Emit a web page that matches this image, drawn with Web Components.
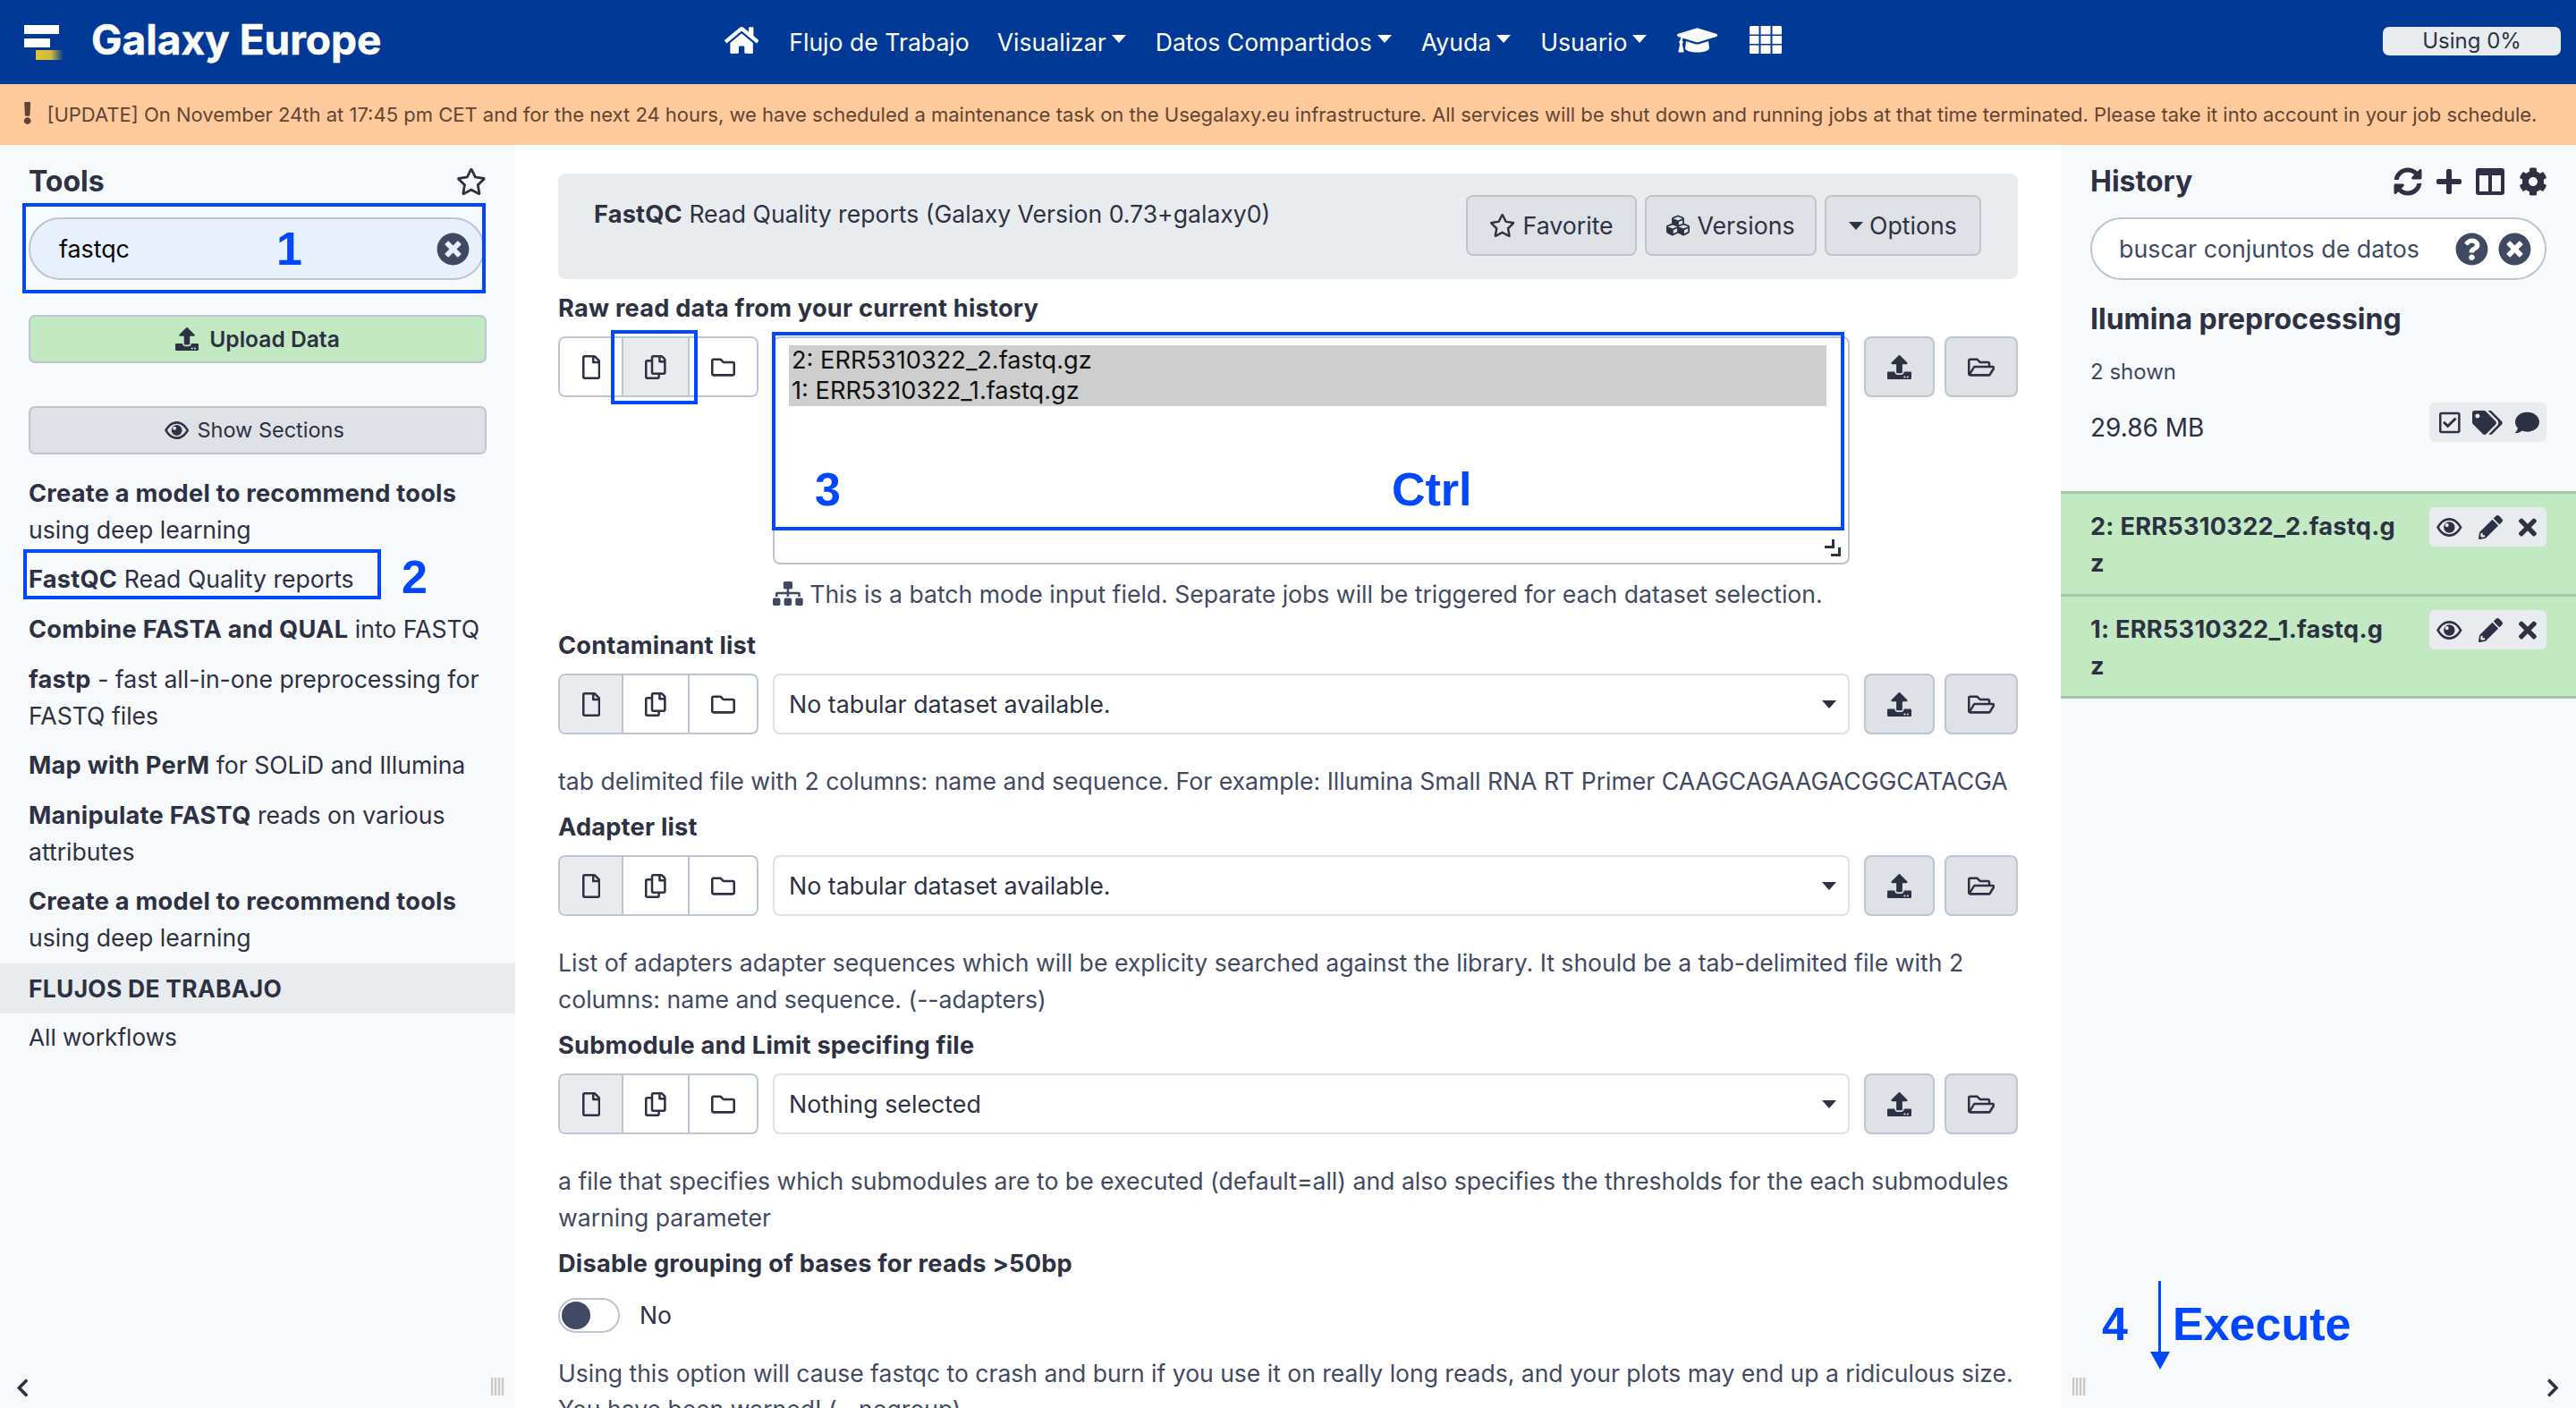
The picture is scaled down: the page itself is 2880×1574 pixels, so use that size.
<!DOCTYPE html>
<html lang="es">
<head>
<meta charset="utf-8">
<title>Galaxy Europe</title>
<style>
html,body{margin:0;padding:0;height:1574px;overflow:hidden;background:#fff}
body{font-family:Inter,"Noto Sans",sans-serif;font-size:26.6px;line-height:40.8px;color:#2c3143;position:relative}
#page{display:flex;flex-direction:column;height:1574px}
#main{display:flex;flex:1;min-height:0}
b{font-weight:700;font-size:27.2px;letter-spacing:.25px}
</style>
</head>
<body>
<div id="page">
  <gx-masthead>
    <gx-nav icon="home" slot="nav" gap="34" h="34"></gx-nav>
    <gx-nav slot="nav" gap="31">Flujo de Trabajo</gx-nav>
    <gx-nav slot="nav" gap="33" caret>Visualizar</gx-nav>
    <gx-nav slot="nav" gap="33" caret>Datos Compartidos</gx-nav>
    <gx-nav slot="nav" gap="33" caret>Ayuda</gx-nav>
    <gx-nav slot="nav" gap="34" caret>Usuario</gx-nav>
    <gx-nav icon="cap" slot="nav" gap="36" h="36"></gx-nav>
    <gx-nav icon="th" slot="nav" h="31"></gx-nav>
  </gx-masthead>
  <gx-banner>[UPDATE] On November 24th at 17:45 pm CET and for the next 24 hours, we have scheduled a maintenance task on the Usegalaxy.eu infrastructure. All services will be shut down and running jobs at that time terminated. Please take it into account in your job schedule.</gx-banner>
  <div id="main">
    <gx-tools>
      <gx-tool><b>Create a model to recommend tools</b> using deep learning</gx-tool>
      <gx-tool><b>FastQC</b> Read Quality reports</gx-tool>
      <gx-tool><b>Combine FASTA and QUAL</b> into FASTQ</gx-tool>
      <gx-tool><b>fastp</b> - fast all-in-one preprocessing for FASTQ files</gx-tool>
      <gx-tool><b>Map with PerM</b> for SOLiD and Illumina</gx-tool>
      <gx-tool><b>Manipulate FASTQ</b> reads on various attributes</gx-tool>
      <gx-tool><b>Create a model to recommend tools</b> using deep learning</gx-tool>
    </gx-tools>
    <gx-form>
      <gx-field label="Raw read data from your current history" active="1" multi>
        <span slot="after"><gx-icon name="sitemap" h="27"></gx-icon> This is a batch mode input field. Separate jobs will be triggered for each dataset selection.</span>
      </gx-field>
      <gx-field label="Contaminant list" active="0" value="No tabular dataset available." help="tab delimited file with 2 columns: name and sequence. For example: Illumina Small RNA RT Primer CAAGCAGAAGACGGCATACGA"></gx-field>
      <gx-field label="Adapter list" active="0" value="No tabular dataset available." help="List of adapters adapter sequences which will be explicity searched against the library. It should be a tab-delimited file with 2 columns: name and sequence. (--adapters)"></gx-field>
      <gx-field label="Submodule and Limit specifing file" active="0" value="Nothing selected" help="a file that specifies which submodules are to be executed (default=all) and also specifies the thresholds for the each submodules warning parameter"></gx-field>
      <gx-toggle label="Disable grouping of bases for reads &gt;50bp" value="No" help="Using this option will cause fastqc to crash and burn if you use it on really long reads, and your plots may end up a ridiculous size. You have been warned! (--nogroup)"></gx-toggle>
    </gx-form>
    <gx-history>
      <gx-dataset w="352">2: ERR5310322_2.fastq.gz</gx-dataset>
      <gx-dataset w="338">1: ERR5310322_1.fastq.gz</gx-dataset>
    </gx-history>
  </div>
</div>

<!-- annotations drawn over the screenshot -->
<gx-mark x="25" y="227" w="518" h="101"></gx-mark>
<gx-mark x="26" y="614" w="400" h="56"></gx-mark>
<gx-mark x="683" y="369" w="97" h="83"></gx-mark>
<gx-mark x="863" y="371" w="1199" h="222"></gx-mark>
<gx-note x="309" y="278">1</gx-note>
<gx-note x="449" y="645">2</gx-note>
<gx-note x="911" y="547">3</gx-note>
<gx-note x="1556" y="547">Ctrl</gx-note>
<gx-note x="2350" y="1480">4</gx-note>
<gx-note x="2429" y="1480">Execute</gx-note>
<gx-arrow x="2404" y="1432" w="22" h="99"></gx-arrow>

<script>
const PATHS={
home:[576,512,"M280.37 148.26L96 300.11V464a16 16 0 0 0 16 16l112.06-.29a16 16 0 0 0 15.92-16V368a16 16 0 0 1 16-16h64a16 16 0 0 1 16 16v95.64a16 16 0 0 0 16 16.05L464 480a16 16 0 0 0 16-16V300L295.67 148.26a12.19 12.19 0 0 0-15.3 0zM571.6 251.47L488 182.56V44.05a12 12 0 0 0-12-12h-56a12 12 0 0 0-12 12v72.61L318.47 43a48 48 0 0 0-61 0L4.34 251.47a12 12 0 0 0-1.6 16.9l25.5 31A12 12 0 0 0 45.15 301l235.22-193.74a12.19 12.19 0 0 1 15.3 0L530.9 301a12 12 0 0 0 16.9-1.6l25.5-31a12 12 0 0 0-1.7-16.93z"],
cap:[640,512,"M622.34 153.2L343.4 67.5c-15.2-4.67-31.6-4.67-46.79 0L17.66 153.2c-23.54 7.23-23.54 38.36 0 45.59l48.63 14.94c-10.67 13.19-17.23 29.28-17.88 46.9C38.78 266.15 32 276.11 32 288c0 10.78 5.68 19.85 13.86 25.65L20.33 428.53C18.11 438.52 25.71 448 35.94 448h56.11c10.24 0 17.84-9.48 15.62-19.47L82.14 313.65C90.32 307.85 96 298.78 96 288c0-11.57-6.47-21.25-15.66-26.87.76-15.02 8.44-28.3 20.69-36.72L296.6 284.5c9.06 2.78 26.44 6.25 46.79 0l278.95-85.7c23.55-7.24 23.55-38.36 0-45.6zM352.79 315.09c-28.53 8.76-52.84 3.92-65.59 0l-145.02-44.55L128 384c0 35.35 85.96 64 192 64s192-28.65 192-64l-14.18-113.47-145.03 44.56z"],
th:[36,31,"M1.500 0H10.500V9.500H0V1.500A1.500 1.500 0 0 1 1.500 0ZM12.500 0H23.500V9.500H12.500ZM25.500 0H34.500A1.500 1.500 0 0 1 36 1.500V9.500H25.500ZM0 11H10.500V20H0ZM12.500 11H23.500V20H12.500ZM25.500 11H36V20H25.500ZM0 21.500H10.500V31H1.500A1.500 1.500 0 0 1 0 29.500ZM12.500 21.500H23.500V31H12.500ZM25.500 21.500H36V29.500A1.500 1.500 0 0 1 34.500 31H25.500Z"],
star:[576,512,"M528.1 171.5L382 150.2 316.7 17.8c-11.7-23.6-45.6-23.9-57.4 0L194 150.2 47.9 171.5c-26.2 3.8-36.7 36.1-17.7 54.6l105.7 103-25 145.5c-4.5 26.3 23.2 46 46.4 33.7L288 439.6l130.7 68.7c23.2 12.2 50.9-7.4 46.4-33.7l-25-145.5 105.7-103c19-18.5 8.5-50.8-17.7-54.6zM388.6 312.3l23.7 138.4L288 385.4l-124.3 65.3 23.7-138.4-100.6-98 139-20.2 62.2-126 62.2 126 139 20.2-100.6 98z"],
close:[512,512,"M256 8C119 8 8 119 8 256s111 248 248 248 248-111 248-248S393 8 256 8zm121.6 313.1c4.7 4.7 4.7 12.3 0 17L338 377.6c-4.7 4.7-12.3 4.7-17 0L256 312l-65.1 65.6c-4.7 4.7-12.3 4.7-17 0L134.4 338c-4.7-4.7-4.7-12.3 0-17l65.6-65-65.6-65.1c-4.7-4.7-4.7-12.3 0-17l39.6-39.6c4.7-4.7 12.3-4.7 17 0l65 65.7 65.1-65.6c4.7-4.7 12.3-4.7 17 0l39.6 39.6c4.7 4.7 4.7 12.3 0 17L312 256l65.6 65.1z"],
help:[512,512,"M504 256c0 136.997-111.043 248-248 248S8 392.997 8 256C8 119.083 119.043 8 256 8s248 111.083 248 248zM262.655 90c-54.497 0-89.255 22.957-116.549 63.758-3.536 5.286-2.353 12.415 2.715 16.258l34.699 26.31c5.205 3.947 12.621 3.008 16.665-2.122 17.864-22.658 30.113-35.797 57.303-35.797 20.429 0 45.698 13.148 45.698 32.958 0 14.976-12.363 22.667-32.534 33.976C247.128 238.528 216 254.941 216 296v4c0 6.627 5.373 12 12 12h56c6.627 0 12-5.373 12-12v-1.333c0-28.462 83.186-29.647 83.186-106.667 0-58.002-60.165-102-116.531-102zM256 338c-25.365 0-46 20.635-46 46 0 25.364 20.635 46 46 46s46-20.636 46-46c0-25.365-20.635-46-46-46z"],
upload:[512,512,"M296 384h-80c-13.3 0-24-10.7-24-24V192h-87.7c-17.8 0-26.7-21.5-14.1-34.1L242.3 5.7c7.5-7.5 19.8-7.5 27.3 0l152.2 152.2c12.6 12.6 3.7 34.1-14.1 34.1H320v168c0 13.3-10.7 24-24 24zm216-8v112c0 13.3-10.7 24-24 24H24c-13.3 0-24-10.7-24-24V376c0-13.3 10.7-24 24-24h136v8c0 30.9 25.1 56 56 56h80c30.9 0 56-25.1 56-56v-8h136c13.3 0 24 10.7 24 24zm-124 88c0-11-9-20-20-20s-20 9-20 20 9 20 20 20 20-9 20-20zm64 0c0-11-9-20-20-20s-20 9-20 20 9 20 20 20 20-9 20-20z"],
eye:[30,22,"M0 11C4 4 9 0 15 0S26 4 30 11C26 18 21 22 15 22S4 18 0 11ZM3.2 11C6.2 6 10 3 15 3S23.800 6 26.800 11C23.800 16 20 19 15 19S6.200 16 3.200 11ZM8.500 11a6.500 6.500 0 1 0 13 0a6.500 6.500 0 1 0-13 0ZM10 8.500a2.200 2.200 0 1 0 4.400 0a2.200 2.200 0 1 0-4.400 0Z","evenodd"],
pencil:[512,512,"M497.9 142.1l-46.1 46.1c-4.7 4.7-12.3 4.7-17 0l-111-111c-4.7-4.7-4.7-12.3 0-17l46.1-46.1c18.7-18.7 49.1-18.7 67.9 0l60.1 60.1c18.8 18.7 18.8 49.1 0 68zM284.2 99.8L21.6 362.4.4 483.9c-2.9 16.4 11.4 30.6 27.8 27.8l121.5-21.3 262.6-262.6c4.7-4.7 4.7-12.3 0-17l-111-111c-4.8-4.7-12.4-4.7-17.1 0zM88 424h48v36.3l-64.500 11.300-31.100-31.100L51.700 376H88v48z"],
times:[352,512,"M242.72 256l100.07-100.07c12.28-12.28 12.28-32.19 0-44.48l-22.24-22.24c-12.28-12.28-32.19-12.28-44.48 0L176 189.28 75.93 89.21c-12.28-12.28-32.19-12.28-44.48 0L9.21 111.45c-12.28 12.28-12.28 32.19 0 44.48L109.28 256 9.21 356.07c-12.28 12.28-12.28 32.19 0 44.48l22.24 22.24c12.28 12.28 32.2 12.28 44.48 0L176 322.72l100.07 100.07c12.28 12.28 32.2 12.28 44.48 0l22.24-22.24c12.28-12.28 12.28-32.19 0-44.48L242.72 256z"],
plus:[448,512,"M416 208H272V64c0-17.67-14.33-32-32-32h-32c-17.67 0-32 14.33-32 32v144H32c-17.67 0-32 14.33-32 32v32c0 17.67 14.33 32 32 32h144v144c0 17.67 14.33 32 32 32h32c17.67 0 32-14.33 32-32V304h144c17.67 0 32-14.33 32-32v-32c0-17.67-14.33-32-32-32z"],
cog:[512,512,"M487.4 315.7l-42.6-24.6c4.3-23.2 4.3-47 0-70.2l42.6-24.6c4.9-2.8 7.1-8.6 5.5-14-11.1-35.6-30-67.8-54.7-94.6-3.8-4.1-10-5.1-14.8-2.3L380.8 110c-17.9-15.4-38.5-27.3-60.8-35.1V25.8c0-5.6-3.9-10.5-9.4-11.7-36.7-8.2-74.3-7.8-109.2 0-5.5 1.2-9.4 6.1-9.4 11.7V75c-22.2 7.9-42.8 19.8-60.8 35.1L88.7 85.5c-4.9-2.8-11-1.9-14.8 2.3-24.7 26.7-43.6 58.9-54.7 94.6-1.7 5.4.6 11.2 5.5 14L67.3 221c-4.3 23.2-4.3 47 0 70.2l-42.6 24.6c-4.9 2.8-7.1 8.6-5.5 14 11.1 35.6 30 67.8 54.7 94.6 3.8 4.1 10 5.1 14.8 2.3l42.6-24.6c17.9 15.4 38.5 27.3 60.8 35.1v49.2c0 5.6 3.9 10.5 9.4 11.7 36.7 8.2 74.3 7.8 109.2 0 5.5-1.2 9.4-6.1 9.4-11.7v-49.2c22.2-7.9 42.8-19.8 60.8-35.1l42.6 24.6c4.9 2.8 11 1.9 14.8-2.3 24.7-26.7 43.6-58.9 54.7-94.6 1.5-5.5-.7-11.3-5.6-14.1zM256 336c-44.1 0-80-35.9-80-80s35.9-80 80-80 80 35.9 80 80-35.9 80-80 80z"],
sync:[512,512,"M370.72 133.28C339.458 104.008 298.888 87.962 255.848 88c-77.458.068-144.328 53.178-162.791 126.85-1.344 5.363-6.122 9.15-11.651 9.15H24.103c-7.498 0-13.194-6.807-11.807-14.176C33.933 94.924 134.813 8 256 8c66.448 0 126.791 26.136 171.315 68.685L463.03 40.97C478.149 25.851 504 36.559 504 57.941V192c0 13.255-10.745 24-24 24H345.941c-21.382 0-32.09-25.851-16.971-40.971l41.75-41.749zM32 296h134.059c21.382 0 32.09 25.851 16.971 40.971l-41.75 41.75c31.262 29.273 71.835 45.319 114.876 45.28 77.418-.07 144.315-53.144 162.787-126.849 1.344-5.363 6.122-9.15 11.651-9.15h57.304c7.498 0 13.194 6.807 11.807 14.176C478.067 417.076 377.187 504 256 504c-66.448 0-126.791-26.136-171.315-68.685L48.97 471.03C33.851 486.149 8 475.441 8 454.059V320c0-13.255 10.745-24 24-24z"],
columns:[512,512,"M48 16h416a48 48 0 0 1 48 48v384a48 48 0 0 1-48 48H48a48 48 0 0 1-48-48V64a48 48 0 0 1 48-48zM64 144v288h160V144zM288 144v288h160V144z","evenodd"],
file:[384,512,"M369.9 97.9L286 14C277 5 264.8-.1 252.1-.1H48C21.5 0 0 21.5 0 48v416c0 26.5 21.5 48 48 48h288c26.5 0 48-21.5 48-48V131.9c0-12.7-5.1-25-14.1-34zM332.1 128H256V51.9l76.1 76.1zM48 464V48h160v104c0 13.3 10.7 24 24 24h104v288H48z"],
copy:[448,512,"M433.941 65.941l-51.882-51.882A48 48 0 0 0 348.118 0H176c-26.51 0-48 21.49-48 48v48H48c-26.51 0-48 21.49-48 48v320c0 26.51 21.49 48 48 48h224c26.51 0 48-21.49 48-48v-48h80c26.51 0 48-21.49 48-48V99.882a48 48 0 0 0-14.059-33.941zM266 464H54a6 6 0 0 1-6-6V150a6 6 0 0 1 6-6h74v224c0 26.51 21.49 48 48 48h96v42a6 6 0 0 1-6 6zm128-96H182a6 6 0 0 1-6-6V54a6 6 0 0 1 6-6h106v88c0 13.255 10.745 24 24 24h88v202a6 6 0 0 1-6 6zm6-256h-64V48h9.632c1.591 0 3.117.632 4.243 1.757l48.368 48.368a6 6 0 0 1 1.757 4.243V112z"],
folder:[512,512,"M464 128H272l-54.63-54.63c-6-6-14.14-9.37-22.63-9.37H48C21.49 64 0 85.49 0 112v288c0 26.51 21.49 48 48 48h416c26.51 0 48-21.49 48-48V176c0-26.51-21.49-48-48-48zm0 272H48V112h140.12l54.63 54.63c6 6 14.14 9.37 22.63 9.37H464v224z"],
open:[576,512,"M527.9 224H480v-48c0-26.5-21.5-48-48-48H272l-64-64H48C21.5 64 0 85.5 0 112v288c0 26.5 21.5 48 48 48h400c16.5 0 31.9-8.5 40.7-22.6l79.9-128c20-31.9-3-73.4-40.7-73.4zM48 118c0-3.3 2.7-6 6-6h134.1l64 64H426c3.3 0 6 2.7 6 6v42H152c-16.8 0-32.4 8.8-41.1 23.2L48 351.4zm400 282H72l77.2-128H528z"],
cubes:[512,512,"M488.6 250.2L392 214V105.5c0-15-9.3-28.4-23.4-33.7l-100-37.5c-8.1-3.1-17.1-3.1-25.3 0l-100 37.5c-14.1 5.3-23.4 18.7-23.4 33.7V214l-96.6 36.2C9.3 255.5 0 268.9 0 283.9V394c0 13.6 7.7 26.1 19.9 32.2l100 50c10.1 5.1 22.1 5.1 32.2 0l103.9-52 103.9 52c10.1 5.1 22.1 5.1 32.2 0l100-50c12.2-6.1 19.9-18.6 19.9-32.2V283.9c0-15-9.3-28.4-23.4-33.7zM358 214.8l-85 31.9v-68.2l85-37v73.3zM154 104.1l102-38.2 102 38.2v.6l-102 41.4-102-41.4v-.6zm84 291.1l-85 42.5v-79.1l85-38.8v75.4zm0-112l-102 41.4-102-41.4v-.6l102-38.2 102 38.2v.6zm240 112l-85 42.5v-79.1l85-38.8v75.4zm0-112l-102 41.4-102-41.4v-.6l102-38.2 102 38.2v.6z"],
tags:[640,512,"M497.941 225.941L286.059 14.059A48 48 0 0 0 252.118 0H48C21.49 0 0 21.49 0 48v204.118a48 48 0 0 0 14.059 33.941l211.882 211.882c18.744 18.745 49.136 18.746 67.882 0l204.118-204.118c18.745-18.745 18.745-49.137 0-67.882zM112 160c-26.51 0-48-21.49-48-48s21.49-48 48-48 48 21.49 48 48-21.49 48-48 48zm513.941 133.823L421.823 497.941c-18.745 18.745-49.137 18.745-67.882 0l-.36-.36L527.64 323.522c16.999-16.999 26.36-39.6 26.36-63.64s-9.362-46.641-26.36-63.64L331.397 0h48.721a48 48 0 0 1 33.941 14.059l211.882 211.882c18.745 18.745 18.745 49.137 0 67.882z"],
comment:[512,512,"M256 32C114.6 32 0 125.1 0 240c0 49.6 21.4 95 57 130.7C44.5 421.1 2.7 466 2.2 466.5c-2.2 2.3-2.8 5.7-1.5 8.7S4.8 480 8 480c66.3 0 116-31.8 140.6-51.4 32.7 12.3 69 19.4 107.4 19.4 141.4 0 256-93.1 256-208S397.4 32 256 32z"],
check:[448,512,"M400 32H48C21.49 32 0 53.49 0 80v352c0 26.51 21.49 48 48 48h352c26.51 0 48-21.49 48-48V80c0-26.51-21.49-48-48-48zm0 400H48V80h352v352zm-35.864-241.724L191.547 361.48c-4.705 4.667-12.303 4.637-16.97-.068l-90.781-91.516c-4.667-4.705-4.637-12.303.069-16.971l22.719-22.536c4.705-4.667 12.303-4.637 16.97.069l59.792 60.277 141.352-140.216c4.705-4.667 12.303-4.637 16.97.068l22.536 22.718c4.667 4.706 4.637 12.304-.068 16.971z"],
sitemap:[640,512,"M128 352H32c-17.67 0-32 14.33-32 32v96c0 17.67 14.33 32 32 32h96c17.67 0 32-14.33 32-32v-96c0-17.67-14.33-32-32-32zm-24-80h192v48h48v-48h192v48h48v-57.59c0-21.17-17.23-38.41-38.41-38.41H344v-64h40c17.67 0 32-14.33 32-32V32c0-17.67-14.33-32-32-32H256c-17.67 0-32 14.33-32 32v96c0 17.67 14.33 32 32 32h40v64H94.41C73.23 224 56 241.23 56 262.41V320h48v-48zm264 80h-96c-17.67 0-32 14.33-32 32v96c0 17.67 14.33 32 32 32h96c17.67 0 32-14.33 32-32v-96c0-17.67-14.33-32-32-32zm240 0h-96c-17.67 0-32 14.33-32 32v96c0 17.67 14.33 32 32 32h96c17.67 0 32-14.33 32-32v-96c0-17.67-14.33-32-32-32z"],
left:[320,512,"M34.52 239.03L228.87 44.69c9.37-9.37 24.57-9.37 33.94 0l22.67 22.67c9.36 9.36 9.38 24.52.04 33.9L131.49 256l154.02 154.75c9.34 9.38 9.32 24.54-.04 33.9l-22.67 22.67c-9.37 9.37-24.57 9.37-33.94 0L34.52 272.97c-9.37-9.37-9.37-24.57 0-33.94z"],
right:[320,512,"M285.48 239.03L91.13 44.69c-9.37-9.37-24.57-9.37-33.94 0L34.52 67.36c-9.36 9.36-9.38 24.52-.04 33.9L188.51 256 34.49 410.75c-9.34 9.38-9.32 24.54.04 33.9l22.67 22.67c9.37 9.37 24.57 9.37 33.94 0l194.34-194.35c9.37-9.37 9.37-24.57 0-33.94z"],
bang:[192,512,"M176 432c0 44.112-35.888 80-80 80s-80-35.888-80-80 35.888-80 80-80 80 35.888 80 80zM25.26 25.199l13.6 272C39.499 309.972 50.041 320 62.83 320h66.34c12.789 0 23.331-10.028 23.97-22.801l13.6-272C167.425 11.49 156.496 0 142.77 0H49.23C35.504 0 24.575 11.49 25.26 25.199z"]
};
function icon(n,h,c){return `<gx-icon name="${n}" h="${h}"${c?` style="color:${c}"`:''}></gx-icon>`}
class Base extends HTMLElement{
  constructor(){super();this.attachShadow({mode:'open'})}
  a(n,d=''){return this.hasAttribute(n)?this.getAttribute(n):d}
}
customElements.define('gx-icon',class extends Base{
  connectedCallback(){
    const [w,h,d,rule]=PATHS[this.a('name')]||[1,1,''];
    const H=+this.a('h',27);
    this.shadowRoot.innerHTML=`<style>:host{display:inline-flex;vertical-align:-3px;flex:none}svg{display:block;fill:currentColor}</style><svg width="${H*w/h}" height="${H}" viewBox="0 0 ${w} ${h}"><path d="${d}" fill-rule="${rule||'nonzero'}"/></svg>`;
  }
});
customElements.define('gx-masthead',class extends Base{
  connectedCallback(){this.shadowRoot.innerHTML=`<style>
  :host{display:flex;flex:none;height:94px;background:#003996;color:#fff;align-items:center;position:relative}
  .logo{flex:none;margin:0 29px 0 27px;width:46px;height:40px;display:block;filter:blur(.6px)}
  .brand{flex:none;font-weight:700;font-size:46px;line-height:50px;margin-top:-6px;width:708px;-webkit-text-stroke:.5px #fff}
  nav{display:flex;align-items:center;flex:1}
  .quota{flex:none;width:199px;height:32px;margin:-2px 17px 0 0;background:#e9ecef;color:#2c3143;border-radius:7px;font-size:24px;line-height:32px;text-align:center}
  </style>
  <svg class="logo" viewBox="0 0 46 40"><defs><linearGradient id="y"><stop offset="0" stop-color="#e3c52f"/><stop offset=".55" stop-color="#cdb93f"/><stop offset="1" stop-color="#003996"/></linearGradient></defs>
  <rect x="0" y="1" width="39" height="10" fill="#fff"/><rect x="0" y="16" width="29" height="10" fill="#fff"/><rect x="13" y="29" width="31" height="11" fill="url(#y)"/></svg>
  <div class="brand">Galaxy Europe</div>
  <nav><slot name="nav"></slot></nav>
  <div class="quota">Using 0%</div>`}
});
customElements.define('gx-nav',class extends Base{
  connectedCallback(){
    const ic=this.a('icon'),car=this.hasAttribute('caret');
    this.shadowRoot.innerHTML=`<style>
    :host{display:inline-flex;align-items:center;flex:none;margin-right:${this.a('gap',0)}px;color:#fff;font-size:26.6px;line-height:40px}
    gx-icon{margin-top:-5px}
    .c{width:0;height:0;border-left:8.5px solid transparent;border-right:8.5px solid transparent;border-top:9px solid #fff;margin:-8px 0 0 6px}
    </style>${ic?icon(ic,this.a('h',34)):''}<slot></slot>${car?'<i class="c"></i>':''}`}
});
customElements.define('gx-banner',class extends Base{
  connectedCallback(){this.shadowRoot.innerHTML=`<style>
  :host{display:flex;flex:none;height:68px;background:#fec99b;color:#5f4634;align-items:center;font-size:22px;line-height:36px;white-space:nowrap;overflow:hidden}
  .i{flex:none;margin:-4px 17px 0 26px;display:flex}
  </style><span class="i">${icon('bang',25,'#5f4634')}</span><span><slot></slot></span>`}
});
customElements.define('gx-search',class extends Base{
  connectedCallback(){
    const v=this.a('value'),ph=this.a('placeholder');
    this.shadowRoot.innerHTML=`<style>
    :host{display:flex;align-items:center;height:70px;box-sizing:border-box;border:2px solid #bdc6d0;border-radius:35px;background:${this.a('bg','#fff')};padding:0 15px 0 32px}
    span{flex:1;color:${v?'#000':'#3f4a62'};font-size:26.8px;white-space:nowrap}
    .r{flex:none;display:flex;gap:11px;color:#3f4a62}
    </style><span>${v||ph}</span><div class="r">${this.hasAttribute('help')?icon('help',37):''}${icon('close',37)}</div>`}
});
customElements.define('gx-tools',class extends Base{
  connectedCallback(){this.shadowRoot.innerHTML=`<style>
  :host{display:block;flex:none;width:576px;background:#f8f9fb;position:relative;box-sizing:border-box;height:100%;overflow:hidden}
  .top{padding:16px 32px 0}
  .head{display:flex;justify-content:space-between;align-items:center;height:50px}
  h2{margin:0;font-size:32px;font-weight:700;line-height:50px}
  gx-search{margin:15px 2px 0 0;padding-left:32px}
  .up,.sec{display:flex;align-items:center;justify-content:center;box-sizing:border-box;border:2px solid #bdc6d0;border-radius:7px;gap:9px}
  .up{height:54px;margin-top:39px;background:#c3e9c2;font-weight:600;font-size:24.6px;gap:12px}
  .sec{height:54px;margin-top:48px;background:#dee2e6;font-size:23.5px;padding-right:7px}
  .list{padding:15px 32px 0}
  .cat{background:#e9ecef;height:56px;line-height:56px;padding:0 32px;font-weight:700;font-size:26.4px;letter-spacing:.3px;margin-top:2px}
  .all{padding:7px 32px;line-height:40px;font-size:26.2px}
  .chev{position:absolute;left:18px;top:1378px;display:flex}
  .grip{position:absolute;left:549px;top:1378px;width:15px;height:20px;background:repeating-linear-gradient(90deg,#c8c8c8 0 2px,#eee 2px 4px)}
  </style>
  <div class="top"><div class="head"><h2>Tools</h2>${icon('star',30)}</div>
  <gx-search value="fastqc" bg="#e8f0fe"></gx-search>
  <div class="up">${icon('upload',26)}Upload Data</div>
  <div class="sec">${icon('eye',20)}Show Sections</div></div>
  <div class="list"><slot></slot></div>
  <div class="cat">FLUJOS DE TRABAJO</div>
  <div class="all">All workflows</div>
  <div class="chev">${icon('left',23)}</div><div class="grip"></div>`}
});
customElements.define('gx-tool',class extends Base{
  connectedCallback(){this.shadowRoot.innerHTML=`<style>:host{display:block;padding:7.5px 0;line-height:40px}</style><slot></slot>`}
});
const BTN=`display:flex;align-items:center;justify-content:center;box-sizing:border-box;border:2px solid #bdc6d0;border-radius:8px;background:#dee2e6`;
customElements.define('gx-form',class extends Base{
  connectedCallback(){this.shadowRoot.innerHTML=`<style>
  :host{display:block;flex:1;min-width:0;padding:32px 48px 0;overflow:hidden;height:100%;box-sizing:border-box}
  .panel{display:flex;justify-content:space-between;background:#e9ecef;border-radius:8px;height:118px;padding:24px 41px 0 40px;box-sizing:border-box;margin-bottom:13px}
  .t{line-height:42px}
  .t b{font-size:27.2px;letter-spacing:.2px}
  .bs{display:flex;gap:9px;height:68px}
  .b{${BTN};gap:8px;font-size:26.7px;flex:none}
  </style>
  <div class="panel"><div class="t"><b>FastQC</b> Read Quality reports (Galaxy Version 0.73+galaxy0)</div>
  <div class="bs"><div class="b" style="width:191px">${icon('star',26)}Favorite</div><div class="b" style="width:192px">${icon('cubes',26)}Versions</div><div class="b" style="width:175px"><i style="width:0;height:0;border-left:8px solid transparent;border-right:8px solid transparent;border-top:9px solid #2c3143;margin-right:-1px"></i>Options</div></div></div>
  <slot></slot>`}
});
customElements.define('gx-field',class extends Base{
  connectedCallback(){
    const act=+this.a('active',0),multi=this.hasAttribute('multi'),help=this.a('help');
    const seg=['file','copy','folder'].map((n,i)=>`<div class="s${i==act?' on':''}" style="width:${[70,74,78][i]}px">${icon(n,27)}</div>`).join('');
    this.shadowRoot.innerHTML=`<style>
    :host{display:block}
    .l{font-weight:700;font-size:27.2px;letter-spacing:.22px;line-height:40px;margin-bottom:11px}
    .row{display:flex;align-items:flex-start;gap:16px}
    .seg{display:flex;flex:none;width:224px;height:68px;box-sizing:border-box;border:2px solid #bdc6d0;border-radius:8px;overflow:hidden;background:#fff}
    .s{display:flex;align-items:center;justify-content:center;box-sizing:border-box;border-left:2px solid #bdc6d0}
    .s:first-child{border-left:0}
    .s.on{background:#e9ecef}
    .sel{flex:1;min-width:0;box-sizing:border-box;border:2px solid #dee2e6;border-radius:8px;height:68px;display:flex;align-items:center;justify-content:space-between;padding:0 13px 0 16px;background:#fff;color:#2c3143;font-size:26.8px}
    .car{width:0;height:0;border-left:8.5px solid transparent;border-right:8.5px solid transparent;border-top:9px solid #2c3143}
    .multi{flex:1;min-width:0;box-sizing:border-box;border:2px solid #bdc6d0;border-radius:8px;height:255px;padding:8px 24px 0 16px;position:relative;background:#fff;color:#111;font-size:27.2px}
    .opts{background:#cecece;height:68px;padding-left:3px;line-height:34px}
    .grab{position:absolute;right:8px;bottom:7px;width:18px;height:19px}
    .act{display:flex;gap:11px;flex:none}
    .b{${BTN};height:68px;width:79px}
    .b+.b{width:82px}
    .h{color:#3f4a62;line-height:40.4px;margin:32px 0 12px}
    .after{color:#3f4a62;line-height:40px;margin:13px 0 18px 240px}
    </style>
    <div class="l">${this.a('label')}</div>
    <div class="row"><div class="seg">${seg}</div>
    ${multi?`<div class="multi"><div class="opts">2: ERR5310322_2.fastq.gz<br>1: ERR5310322_1.fastq.gz</div><svg class="grab" viewBox="0 0 18 19"><path d="M0 7h8v-7h3v10H0zM7 16h8v-7h3v10H7z" fill="#2c3143"/></svg></div>`:`<div class="sel"><span>${this.a('value')}</span><i class="car"></i></div>`}
    <div class="act"><div class="b">${icon('upload',27)}</div><div class="b">${icon('open',27)}</div></div></div>
    ${help?`<div class="h">${help}</div>`:''}
    ${multi?`<div class="after"><slot name="after"></slot></div>`:''}`}
});
customElements.define('gx-toggle',class extends Base{
  connectedCallback(){this.shadowRoot.innerHTML=`<style>
  :host{display:block}
  .l{font-weight:700;font-size:27.2px;letter-spacing:.22px;line-height:40px;margin-bottom:18px}
  .row{display:flex;align-items:center;gap:22px;height:39px}
  .sw{width:69px;height:39px;box-sizing:border-box;border:2px solid #bdc6d0;border-radius:20px;background:#fff;position:relative}
  .sw i{position:absolute;left:2px;top:2px;width:32px;height:31px;border-radius:50%;background:#3f4a62}
  .h{color:#3f4a62;line-height:40px;margin-top:25px;font-size:26.5px}
  </style><div class="l">${this.a('label')}</div><div class="row"><div class="sw"><i></i></div><span>${this.a('value')}</span></div><div class="h">${this.a('help')}</div>`}
});
customElements.define('gx-history',class extends Base{
  connectedCallback(){this.shadowRoot.innerHTML=`<style>
  :host{display:block;flex:none;width:576px;background:#f8f9fb;position:relative;box-sizing:border-box;height:100%;overflow:hidden}
  .top{padding:16px 33px 0}
  .head{display:flex;justify-content:space-between;align-items:center;height:50px}
  h2{margin:0;font-size:32px;font-weight:700;line-height:50px}
  .ic{display:flex;gap:16px;align-items:center;margin-right:-1px}
  gx-search{margin-top:15px;padding-left:30px}
  h3{margin:19px 0 0;font-size:32px;font-weight:700;line-height:50px}
  .sh{font-size:24px;line-height:36px;margin-top:16px;color:#3f4a62}
  .sz{display:flex;justify-content:space-between;align-items:flex-start;margin-top:16px;height:99px}
  .sz span{margin-top:8px;font-size:28px}
  .grp{display:flex;align-items:center;justify-content:space-between;box-sizing:border-box;width:131px;height:44px;background:#e9ecef;border-radius:6px;padding:0 8px 0 11px}
  .grip{position:absolute;left:13px;top:1378px;width:16px;height:20px;background:repeating-linear-gradient(90deg,#c8c8c8 0 2px,#eee 2px 4px)}
  .chev{position:absolute;left:543px;top:1378px;display:flex}
  </style>
  <div class="top"><div class="head"><h2>History</h2><div class="ic">${icon('sync',32)}${icon('plus',32)}${icon('columns',32)}${icon('cog',32)}</div></div>
  <gx-search placeholder="buscar conjuntos de datos" help></gx-search>
  <h3>Ilumina preprocessing</h3>
  <div class="sh">2 shown</div>
  <div class="sz"><span>29.86 MB</span><div class="grp">${icon('check',27)}${icon('tags',27)}${icon('comment',27)}</div></div></div>
  <slot></slot>
  <div class="grip"></div><div class="chev">${icon('right',23)}</div>`}
});
customElements.define('gx-dataset',class extends Base{
  connectedCallback(){this.shadowRoot.innerHTML=`<style>
  :host{display:flex;justify-content:space-between;align-items:flex-start;box-sizing:border-box;height:115px;background:#c3e9c2;border-top:3px solid #a4c8a4;padding:15px 33px 0}
  :host(:last-of-type){height:117px;border-bottom:3px solid #a4c8a4}
  .n{font-weight:700;font-size:27.2px;letter-spacing:.25px;width:${this.a('w',352)}px;word-break:break-all;line-height:41px;margin-top:1px}
  .grp{display:flex;align-items:center;justify-content:space-between;box-sizing:border-box;flex:none;width:131px;height:44px;background:#e9ecef;border-radius:6px;padding:0 11px 0 8px}
  </style><div class="n"><slot></slot></div><div class="grp">${icon('eye',21)}${icon('pencil',27)}${icon('times',29)}</div>`}
});
customElements.define('gx-mark',class extends Base{
  connectedCallback(){this.shadowRoot.innerHTML=`<style>:host{position:absolute;display:block;box-sizing:border-box;left:${this.a('x')}px;top:${this.a('y')}px;width:${this.a('w')}px;height:${this.a('h')}px;border:4px solid #0047ff}</style>`}
});
customElements.define('gx-note',class extends Base{
  connectedCallback(){this.shadowRoot.innerHTML=`<style>:host{position:absolute;display:block;left:${this.a('x')}px;top:${+this.a('y')-30}px;line-height:60px;font:bold 52px/60px "Liberation Sans",Arial,sans-serif;color:#0047ff;white-space:nowrap}</style><slot></slot>`}
});
customElements.define('gx-arrow',class extends Base{
  connectedCallback(){this.shadowRoot.innerHTML=`<style>:host{position:absolute;display:block;left:${this.a('x')}px;top:${this.a('y')}px}svg{display:block}</style><svg width="${this.a('w')}" height="${this.a('h')}" viewBox="0 0 22 99"><path d="M9 0h3v79h10L11 99 0 79h9z" fill="#0047ff"/></svg>`}
});
</script>
</body>
</html>
